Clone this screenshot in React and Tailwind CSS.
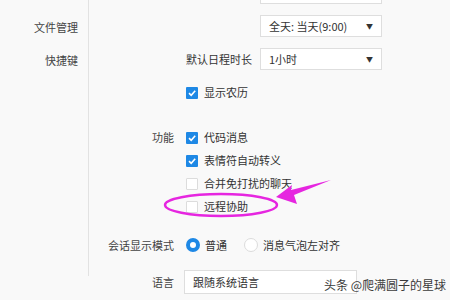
import React from "react";

const font = { fontFamily: '"Noto Sans CJK SC", "Noto Sans", sans-serif' };

function Select({ value, className = "", arrow = true }) {
  return (
    <div
      className={`w-[122px] h-[22px] bg-white border border-[#dedede] flex items-center justify-between pl-[8px] pr-[8px] text-[11px] text-[#333] ${className}`}
    >
      <span>{value}</span>
      {arrow && <span className="text-[7px] text-[#333]">▼</span>}
    </div>
  );
}

function Check({ checked, label }) {
  return (
    <div className="flex items-center h-[23px]">
      {checked ? (
        <div className="w-[12px] h-[12px] bg-[#1e88e5] rounded-[1px] flex items-center justify-center">
          <svg width="10" height="10" viewBox="0 0 10 10">
            <path d="M2 5.2 L4.2 7.3 L8.2 2.8" fill="none" stroke="white" strokeWidth="1.6" />
          </svg>
        </div>
      ) : (
        <div className="w-[12px] h-[12px] bg-white border border-[#dcdcdc] rounded-[1px]" />
      )}
      <span className="ml-[6px] text-[11px] text-[#333]">{label}</span>
    </div>
  );
}

function Radio({ checked, label }) {
  return (
    <div className="flex items-center">
      {checked ? (
        <div className="w-[14px] h-[14px] rounded-full border-[4px] border-[#1e88e5] bg-white" />
      ) : (
        <div className="w-[14px] h-[14px] rounded-full border border-[#dcdcdc] bg-white" />
      )}
      <span className="ml-[5px] text-[11px] text-[#333]">{label}</span>
    </div>
  );
}

export default function App() {
  return (
    <div
      className="relative w-[450px] h-[300px] overflow-hidden bg-[#f9f9f9] flex"
      style={font}
    >
      {/* sidebar */}
      <div className="w-[89px] h-[276px] border-r border-[#e2e2e2] flex flex-col items-end pr-[10px] pt-[19px] gap-[17px] text-[11px] text-[#444] leading-[16px]">
        <span>文件管理</span>
        <span>快捷键</span>
      </div>

      {/* settings */}
      <div className="flex-1 flex flex-col">
        <div className="ml-[171px] mt-[-18px]">
          <Select value="" arrow={false} />
        </div>
        <div className="ml-[171px] mt-[11px]">
          <Select value="全天: 当天(9:00)" />
        </div>
        <div className="ml-[97px] mt-[11px] flex items-center">
          <span className="w-[74px] text-[11px] text-[#333]">默认日程时长</span>
          <Select value="1小时" />
        </div>
        <div className="ml-[97px] mt-[11px]">
          <Check checked label="显示农历" />
        </div>

        <div className="flex mt-[22px]">
          <div className="w-[85px] h-[23px] flex items-center justify-end text-[11px] text-[#444]">
            功能
          </div>
          <div className="ml-[12px] flex flex-col">
            <Check checked label="代码消息" />
            <Check checked label="表情符自动转义" />
            <Check label="合并免打扰的聊天" />
            <Check label="远程协助" />
          </div>
        </div>

        <div className="flex items-center mt-[17px] h-[20px]">
          <div className="w-[85px] text-right text-[11px] text-[#444]">会话显示模式</div>
          <div className="ml-[12px] flex items-center gap-[17px]">
            <Radio checked label="普通" />
            <Radio label="消息气泡左对齐" />
          </div>
        </div>

        <div className="flex items-center mt-[15px]">
          <div className="w-[85px] text-right text-[11px] text-[#444]">语言</div>
          <div className="ml-[10px] w-[173px] h-[24px] bg-white border border-[#dedede] flex items-center pl-[8px] text-[11px] text-[#333]">
            跟随系统语言
          </div>
        </div>
      </div>

      {/* annotation */}
      <svg className="absolute left-0 top-0" width="450" height="300">
        <ellipse cx="221" cy="205" rx="56" ry="11" fill="none" stroke="#e626e0" strokeWidth="2.4" />
        <polygon
          points="276,197 292,185 291,190 331,180 294,195 297,204"
          fill="#e626e0"
        />
      </svg>

      {/* watermark */}
      <div
        className="absolute left-[324px] top-[276px] text-[12px] text-[#3a3a3a]"
        style={{ textShadow: "0 0 2px #fff" }}
      >
        头条 @爬满圆子的星球
      </div>
    </div>
  );
}
